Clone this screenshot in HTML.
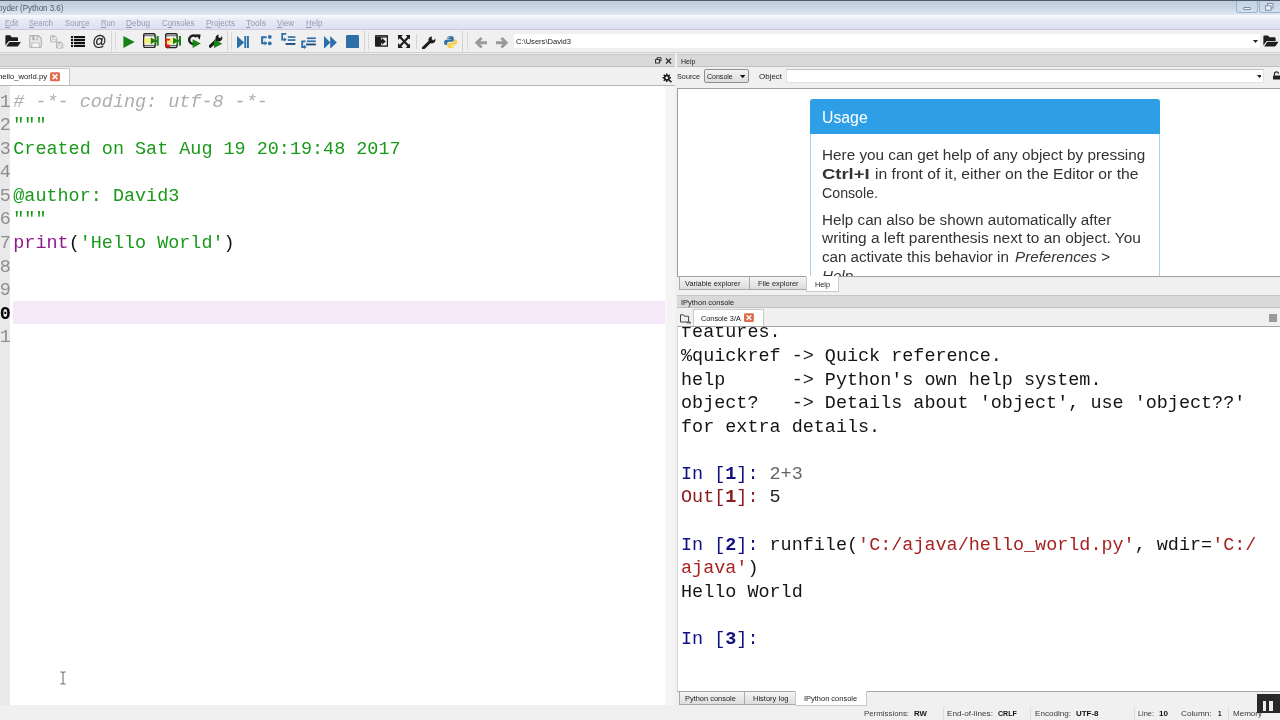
<!DOCTYPE html>
<html>
<head>
<meta charset="utf-8">
<title>Spyder (Python 3.6)</title>
<style>
html,body{margin:0;padding:0;}
body{will-change:transform;width:1280px;height:720px;overflow:hidden;background:#f0f0f0;position:relative;font-family:"Liberation Sans",sans-serif;font-size:8px;color:#222;}
.abs{position:absolute;}
.lb{position:absolute;white-space:nowrap;line-height:12px;height:12px;transform-origin:0 50%;}
.lb u{text-decoration-thickness:0.5px;text-underline-offset:1px;}
#titlebar{left:0;top:0;width:1280px;height:15px;background:linear-gradient(#c0ccdc 0,#ccd8e6 55%,#e0e8f2 100%);border-top:1px solid #505a64;box-sizing:border-box;}
#menubar{left:0;top:15px;width:1280px;height:15px;box-sizing:border-box;border-bottom:1px solid #c9cbd8;background:linear-gradient(#fbfcfe 0,#e8ebf6 35%,#dcdff0 100%);}
.sep{position:absolute;top:31px;width:1px;height:21px;background:#d4d4d4;}
.grip{position:absolute;top:33px;width:1px;height:18px;background-image:linear-gradient(#c2c2c2 50%,transparent 50%);background-size:1px 2px;}
.band{position:absolute;height:13px;background:#d9d9d9;border-top:1px solid #c6c6c6;border-bottom:1px solid #c2c2c2;box-sizing:border-box;}
.mono{font-family:"Liberation Mono",monospace;font-size:18.45px;white-space:pre;line-height:23.5px;}
.ln{position:absolute;left:0;height:23.5px;}
.tab{position:absolute;box-sizing:border-box;border:1px solid #a9a9a9;background:linear-gradient(#f4f4f4,#dddddd);}
.tab.sel{background:#fff;border-color:#c9c9c9;}
.hp{font-size:15.4px;line-height:18.75px;color:#333;white-space:nowrap;}
</style>
</head>
<body>
<div id="titlebar" class="abs"></div>
<div id="title" class="lb" style="left:-1.6px;top:1.5px;font-size:9px;color:#505a66;transform:scaleX(0.8832);">pyder (Python 3.6)</div>
<div id="menubar" class="abs"></div>
<div id="m1" class="lb" style="left:4.5px;top:16.5px;font-size:8.5px;color:#959bad;transform:scaleX(0.8870);"><u>E</u>dit</div>
<div id="m2" class="lb" style="left:29px;top:16.5px;font-size:8.5px;color:#959bad;transform:scaleX(0.8910);"><u>S</u>earch</div>
<div id="m3" class="lb" style="left:64.5px;top:16.5px;font-size:8.5px;color:#959bad;transform:scaleX(0.9090);">Sour<u>c</u>e</div>
<div id="m4" class="lb" style="left:100.5px;top:16.5px;font-size:8.5px;color:#959bad;transform:scaleX(0.8969);"><u>R</u>un</div>
<div id="m5" class="lb" style="left:126px;top:16.5px;font-size:8.5px;color:#959bad;transform:scaleX(0.9576);"><u>D</u>ebug</div>
<div id="m6" class="lb" style="left:162px;top:16.5px;font-size:8.5px;color:#959bad;transform:scaleX(0.9167);">C<u>o</u>nsoles</div>
<div id="m7" class="lb" style="left:205.5px;top:16.5px;font-size:8.5px;color:#959bad;transform:scaleX(0.9440);"><u>P</u>rojects</div>
<div id="m8" class="lb" style="left:246px;top:16.5px;font-size:8.5px;color:#959bad;transform:scaleX(1.0079);"><u>T</u>ools</div>
<div id="m9" class="lb" style="left:277px;top:16.5px;font-size:8.5px;color:#959bad;transform:scaleX(0.9291);"><u>V</u>iew</div>
<div id="m10" class="lb" style="left:305.7px;top:16.5px;font-size:8.5px;color:#959bad;transform:scaleX(0.9323);"><u>H</u>elp</div>
<div class="abs" style="left:1236px;top:1px;width:22px;height:12px;box-sizing:border-box;border:1px solid #9fb2c8;border-top:none;border-radius:0 0 3px 3px;background:linear-gradient(#c3d3e6,#d2deed);"></div>
<div class="abs" style="left:1259px;top:1px;width:24px;height:12px;box-sizing:border-box;border:1px solid #9fb2c8;border-top:none;border-radius:0 0 3px 3px;background:linear-gradient(#c3d3e6,#d2deed);"></div>
<div class="abs" style="left:1243px;top:7px;width:8px;height:3px;box-sizing:border-box;border:1px solid #7f8b9c;background:#eef3f9;border-radius:1px;"></div>
<svg class="abs" style="left:1265px;top:3px" width="9" height="8" viewBox="0 0 9 8"><rect x="2.5" y="0.5" width="5.5" height="4.5" fill="#e4ebf4" stroke="#7f8b9c" stroke-width="0.9"/><rect x="0.5" y="2.8" width="5.5" height="4.5" fill="#e4ebf4" stroke="#7f8b9c" stroke-width="0.9"/></svg>
<div class="sep" style="left:111px"></div>
<div class="sep" style="left:227px"></div>
<div class="sep" style="left:364px"></div>
<div class="sep" style="left:462px"></div>
<div class="grip" style="left:115px"></div>
<div class="grip" style="left:231px"></div>
<div class="grip" style="left:368px"></div>
<div class="grip" style="left:467px"></div>
<div class="abs" style="left:416px;top:34px;width:1px;height:15px;background:#d4d4d4;"></div>
<svg class="abs" style="left:5px;top:35px" width="16" height="12" viewBox="0 0 16 12"><path d="M0.4 1.1 Q0.4 0.2 1.3 0.2 H4.8 Q5.4 0.2 5.8 0.8 L6.6 2.2 H12 Q13 2.2 13 3.2 V6 H4.4 Q3.6 6 3.2 6.8 L0.4 10.6 Z" fill="#1e1e1e"/><path d="M4.5 6.9 H15.2 Q15.9 6.9 15.5 7.6 L13 11.2 Q12.7 11.6 12 11.6 H1.2 Z" fill="#1e1e1e"/></svg>
<svg class="abs" style="left:29px;top:35px" width="13" height="13" viewBox="0 0 13 13"><path d="M0.8 1.5 Q0.8 0.6 1.7 0.6 H9.3 L12.3 3.6 V11.5 Q12.3 12.4 11.4 12.4 H1.7 Q0.8 12.4 0.8 11.5 Z" fill="#e9e9e9" stroke="#aeaeae" stroke-width="1.1"/><rect x="3.2" y="0.8" width="5.6" height="4.4" fill="#b4b4b4"/><rect x="5.6" y="1.2" width="2" height="3.4" fill="#f0f0f0"/><rect x="2.9" y="7.9" width="7.4" height="4.4" fill="#f6f6f6" stroke="#b4b4b4" stroke-width="0.8"/></svg>
<svg class="abs" style="left:50.4px;top:35px" width="14" height="14" viewBox="0 0 14 14"><path d="M0.5 0.9 H5.2 L6.8 2.5 V6.8 H0.5 Z" fill="#e9e9e9" stroke="#b2b2b2" stroke-width="0.9"/><rect x="1.8" y="0.9" width="2.8" height="1.9" fill="#bdbdbd"/><rect x="1.7" y="4.3" width="3.8" height="2.4" fill="#f3f3f3" stroke="#bbb" stroke-width="0.6"/><g transform="translate(6,6.2)"><path d="M0.5 0.9 H5.2 L6.8 2.5 V6.8 H0.5 Z" fill="#e9e9e9" stroke="#b2b2b2" stroke-width="0.9"/><rect x="1.8" y="0.9" width="2.8" height="1.9" fill="#bdbdbd"/><rect x="1.7" y="4.3" width="3.8" height="2.4" fill="#f3f3f3" stroke="#bbb" stroke-width="0.6"/></g></svg>
<svg class="abs" style="left:71px;top:35.5px" width="14" height="11.6" viewBox="0 0 14 11.6"><rect x="0" y="0" width="2" height="2.2" fill="#111"/><rect x="2.9" y="0" width="11.1" height="2.2" fill="#111"/><rect x="0" y="3" width="2" height="2.2" fill="#111"/><rect x="2.9" y="3" width="11.1" height="2.2" fill="#111"/><rect x="0" y="6" width="2" height="2.2" fill="#111"/><rect x="2.9" y="6" width="11.1" height="2.2" fill="#111"/><rect x="0" y="9" width="2" height="2.2" fill="#111"/><rect x="2.9" y="9" width="11.1" height="2.2" fill="#111"/></svg>
<svg class="abs" style="left:92px;top:33px" width="16" height="17" viewBox="0 0 16 17"><g transform="translate(-1.0,0.22) scale(1.08,1.04)"><text x="1.5" y="12.4" font-family="Liberation Sans" font-size="14.4" fill="#1c1c1c" stroke="#1c1c1c" stroke-width="0.25" textLength="12.9" lengthAdjust="spacingAndGlyphs">@</text></g></svg>
<svg class="abs" style="left:123px;top:36px" width="12" height="12" viewBox="0 0 12 12"><path d="M0.4 0 L11.6 6 L0.4 12 Z" fill="#158215"/></svg>
<svg class="abs" style="left:143.4px;top:33px" width="16" height="15.4" viewBox="0 0 16 15.4"><rect x="0.7" y="0.7" width="11.4" height="13.8" rx="1.4" fill="#fff" stroke="#262626" stroke-width="1.4"/><rect x="1.4" y="5" width="10" height="5.6" fill="#f4ef7c"/><path d="M0.6 2.8 H12.2 M0.6 12.4 H12.2" stroke="#444" stroke-width="0.9"/><path d="M7.8 4.2 L12.8 7.8 L7.8 11.4 Z" fill="#158215"/><rect x="8.6" y="6.8" width="5.4" height="2" fill="#158215"/><rect x="13.6" y="3" width="2.1" height="9.6" fill="#158215"/></svg>
<svg class="abs" style="left:165px;top:33px" width="17" height="16" viewBox="0 0 17 16"><rect x="0.7" y="0.7" width="11.4" height="13.8" rx="1.4" fill="#fff" stroke="#262626" stroke-width="1.4"/><rect x="1.4" y="5" width="10" height="5.6" fill="#f4ef7c"/><path d="M0.6 2.8 H12.2 M0.6 12.4 H12.2" stroke="#444" stroke-width="0.9"/><g transform="translate(0.3,0)"><path d="M7.8 4.2 L12.8 7.8 L7.8 11.4 Z" fill="#158215"/><rect x="8.6" y="6.8" width="5.4" height="2" fill="#158215"/><rect x="13.6" y="3" width="2.1" height="9.6" fill="#158215"/></g><path d="M4.8 6.6 H1 V13 H3.2" fill="none" stroke="#e01818" stroke-width="1.8"/><path d="M2.4 10.4 L5.4 13.2 L2.6 15.8 Z" fill="#e01818"/></svg>
<svg class="abs" style="left:187.5px;top:34px" width="13" height="14.2" viewBox="0 0 13 14.2"><path d="M8.5 3.0 A4.2 4.2 0 1 0 8.7 8.3" fill="none" stroke="#1c1c1c" stroke-width="2.4"/><path d="M7.2 0.2 L12.6 0.6 L11.8 5.8 Z" fill="#1c1c1c"/><path d="M4.6 5.2 L12.8 9.6 L4.6 14 Z" fill="#158215"/></svg>
<svg class="abs" style="left:208.5px;top:34px" width="14" height="14.5" viewBox="0 0 14 14.5"><path d="M1.4 12.2 L8.4 5.6" stroke="#1c1c1c" stroke-width="3.2" stroke-linecap="round"/><path d="M12.9 2.3 A3.4 3.4 0 1 1 9.6 0.6 L9.4 3 L11.3 4.2 Z" fill="#1c1c1c"/><path d="M5 5.6 L13.4 9.8 L5 14 Z" fill="#158215"/></svg>
<svg class="abs" style="left:237.2px;top:35.6px" width="12" height="12.8" viewBox="0 0 12 12.8"><path d="M0 0 L7.2 6.4 L0 12.8 Z" fill="#2f6fa8"/><rect x="7.3" y="0" width="1.9" height="12.8" fill="#2f6fa8"/><rect x="10" y="0" width="1.9" height="12.8" fill="#2f6fa8"/></svg>
<svg class="abs" style="left:260.8px;top:35px" width="11" height="11" viewBox="0 0 11 11"><circle cx="8.8" cy="1.9" r="1.9" fill="#2f6fa8"/><circle cx="8.8" cy="8.4" r="1.9" fill="#2f6fa8"/><path d="M5.6 2.2 H1.1 V8.2 H4" fill="none" stroke="#2f6fa8" stroke-width="2"/><path d="M3.6 5.8 L6.4 8.2 L3.6 10.6 Z" fill="#2f6fa8"/></svg>
<svg class="abs" style="left:280.5px;top:33px" width="15" height="12.5" viewBox="0 0 15 12.5"><path d="M5.2 0.9 H1.2 V6.6 H3.6" fill="none" stroke="#2f6fa8" stroke-width="1.8"/><path d="M3.2 4.4 L5.8 6.6 L3.2 8.8 Z" fill="#2f6fa8"/><rect x="6.8" y="3.2" width="7.6" height="1.7" fill="#2f6fa8"/><rect x="6.8" y="6.2" width="7.6" height="1.7" fill="#2f6fa8"/><rect x="4.6" y="10" width="9.8" height="1.9" fill="#1f4e80"/></svg>
<svg class="abs" style="left:301.4px;top:36.5px" width="15.5" height="12" viewBox="0 0 15.5 12"><rect x="6" y="0.4" width="8.8" height="1.7" fill="#2f6fa8"/><rect x="6" y="3.4" width="8.8" height="1.7" fill="#2f6fa8"/><rect x="5" y="6.5" width="9.8" height="1.9" fill="#1f4e80"/><path d="M4.6 4.4 H1.2 V10 H3.4" fill="none" stroke="#2f6fa8" stroke-width="1.9"/><path d="M3 7.8 L5.6 10 L3 12 Z" fill="#2f6fa8"/></svg>
<svg class="abs" style="left:324px;top:35.6px" width="13" height="12.8" viewBox="0 0 13 12.8"><path d="M0 0 L6.4 6.4 L0 12.8 Z M6.2 0 L12.8 6.4 L6.2 12.8 Z" fill="#2f6fa8"/></svg>
<svg class="abs" style="left:346.3px;top:35px" width="13" height="13.2" viewBox="0 0 13 13.2"><rect x="0" y="0" width="13" height="13.2" rx="1.2" fill="#2f6fa8"/></svg>
<svg class="abs" style="left:375px;top:35px" width="13.2" height="11.8" viewBox="0 0 13.2 11.8"><rect x="0" y="0" width="13.2" height="11.8" rx="1" fill="#1e1e1e"/><rect x="0.8" y="0.6" width="11.6" height="1.2" fill="#555"/><rect x="6.2" y="2.6" width="5.6" height="7.8" fill="#f0f0f0"/><path d="M1.6 4.8 H7 V3 L10.8 6.4 L7 9.8 V8 H1.6 Z" fill="#1e1e1e"/></svg>
<svg class="abs" style="left:397.5px;top:35px" width="12.6" height="13" viewBox="0 0 12.6 13"><path d="M2 2 L10.6 11 M10.6 2 L2 11" stroke="#1e1e1e" stroke-width="2.2"/><path d="M0 0 H5 L0 5 Z M12.6 0 V5 L7.6 0 Z M0 13 V8 L5 13 Z M12.6 13 H7.6 L12.6 8 Z" fill="#1e1e1e"/></svg>
<svg class="abs" style="left:422.3px;top:35.5px" width="14" height="13.4" viewBox="0 0 14 13.4"><path d="M1.4 12 L8.6 5" stroke="#1e1e1e" stroke-width="3.1" stroke-linecap="round"/><path d="M13.2 2.6 A3.5 3.5 0 1 1 10 0.4 L9.6 3 L11.6 4.4 Z" fill="#1e1e1e"/></svg>
<svg class="abs" style="left:444px;top:35.6px" width="13.2" height="12.6" viewBox="0 0 13.2 12.6"><path d="M6.4 0 Q3.4 0 3.4 1.8 V3.2 H6.8 V3.8 H2 Q0 3.8 0 6.4 Q0 9 2 9 H3.2 V7.4 Q3.2 5.8 5 5.8 H8.2 Q9.8 5.8 9.8 4.2 V1.8 Q9.8 0 6.4 0 Z" fill="#3572a5"/><circle cx="4.9" cy="1.6" r="0.6" fill="#fff"/><path d="M6.8 12.6 Q9.8 12.6 9.8 10.8 V9.4 H6.4 V8.8 H11.2 Q13.2 8.8 13.2 6.2 Q13.2 3.6 11.2 3.6 H10 V5.2 Q10 6.8 8.2 6.8 H5 Q3.4 6.8 3.4 8.4 V10.8 Q3.4 12.6 6.8 12.6 Z" fill="#f6cf4c"/><circle cx="8.3" cy="11" r="0.6" fill="#fff"/></svg>
<svg class="abs" style="left:475px;top:36.5px" width="12" height="11.5" viewBox="0 0 12 11.5"><path d="M6.6 1 L1.8 5.75 L6.6 10.5 M2.4 5.75 H12" fill="none" stroke="#9a9a9a" stroke-width="2.8"/></svg>
<svg class="abs" style="left:496px;top:36.5px" width="12" height="11.5" viewBox="0 0 12 11.5"><path d="M5.4 1 L10.2 5.75 L5.4 10.5 M9.6 5.75 H0" fill="none" stroke="#9a9a9a" stroke-width="2.8"/></svg>
<div class="abs" style="left:514px;top:34px;width:746px;height:14px;background:#fff;"></div>
<div id="path" class="lb" style="left:516px;top:35.5px;font-size:8px;color:#222;transform:scaleX(0.9442);">C:\Users\David3</div>
<svg class="abs" style="left:1252.5px;top:39.5px" width="5" height="3" viewBox="0 0 5 3"><path d="M0 0 H5 L2.5 3 Z" fill="#222"/></svg>
<svg class="abs" style="left:1262.5px;top:35px" width="15.5" height="12" viewBox="0 0 16 12"><path d="M0.4 1.1 Q0.4 0.2 1.3 0.2 H4.8 Q5.4 0.2 5.8 0.8 L6.6 2.2 H12 Q13 2.2 13 3.2 V6 H4.4 Q3.6 6 3.2 6.8 L0.4 10.6 Z" fill="#1e1e1e"/><path d="M4.5 6.9 H15.2 Q15.9 6.9 15.5 7.6 L13 11.2 Q12.7 11.6 12 11.6 H1.2 Z" fill="#1e1e1e"/></svg>
<div class="abs" style="left:0;top:52px;width:1280px;height:1px;background:#cdcdcd;"></div>
<div class="band" style="left:0;top:54px;width:675px;"></div>
<div class="abs" style="left:-2px;top:68px;width:72px;height:18px;background:#fff;border:1px solid #c6c6c6;border-bottom:none;box-sizing:border-box;"></div>
<div class="abs" style="left:0;top:85px;width:675px;height:1px;background:#b6b6b6;"></div>
<div id="edtab" class="lb" style="left:-2px;top:71.2px;font-size:8px;color:#222;transform:scaleX(0.9581);">hello_world.py</div>
<svg class="abs" style="left:50.4px;top:72.2px" width="10" height="9.5" viewBox="0 0 10 9"><rect x="0" y="0" width="10" height="9" rx="1.5" fill="#e06a4c"/><path d="M3.1 2.6 L6.9 6.4 M6.9 2.6 L3.1 6.4" stroke="#fff" stroke-width="1.5" stroke-linecap="round"/></svg>
<svg class="abs" style="left:653px;top:56px" width="22" height="10" viewBox="0 0 22 10"><rect x="2.5" y="3.5" width="4" height="3.5" fill="none" stroke="#333" stroke-width="1"/><path d="M4 3 V1.7 H8 V5 H7" fill="none" stroke="#333" stroke-width="1"/><path d="M13 2.5 L18 7.5 M18 2.5 L13 7.5" stroke="#222" stroke-width="1.1"/></svg>
<svg class="abs" style="left:662px;top:73.2px" width="10.4" height="10.4" viewBox="0 0 12 12"><g fill="#1a1a1a"><circle cx="5.5" cy="5.5" r="3.4"/><g stroke="#1a1a1a" stroke-width="1.7"><path d="M5.5 0.6 V10.4 M0.6 5.5 H10.4 M2 2 L9 9 M9 2 L2 9"/></g></g><circle cx="5.5" cy="5.5" r="1.6" fill="#f0f0f0"/><path d="M8.5 8.5 L11 10.5" stroke="#1a1a1a" stroke-width="1.6"/></svg>
<div class="abs" style="left:0;top:86px;width:665px;height:619px;background:#fff;overflow:hidden;">
<div class="abs" style="left:0;top:0;width:10px;height:619px;background:#e9e9e9;"></div>
<div class="abs" style="left:13px;top:214.5px;width:652px;height:23.5px;background:#f5e9f9;"></div>
<div class="ln mono" style="top:4.6px;"><span style="display:inline-block;width:13.6px;margin-left:-0.3px;color:#8e8e8e;">1</span><span style="color:#adadad;font-style:italic"># -*- coding: utf-8 -*-</span></div>
<div class="ln mono" style="top:28.159999999999997px;"><span style="display:inline-block;width:13.6px;margin-left:-0.3px;color:#8e8e8e;">2</span><span style="color:#1a9a1a">"""</span></div>
<div class="ln mono" style="top:51.72px;"><span style="display:inline-block;width:13.6px;margin-left:-0.3px;color:#8e8e8e;">3</span><span style="color:#1a9a1a">Created on Sat Aug 19 20:19:48 2017</span></div>
<div class="ln mono" style="top:75.27999999999999px;"><span style="display:inline-block;width:13.6px;margin-left:-0.3px;color:#8e8e8e;">4</span></div>
<div class="ln mono" style="top:98.83999999999999px;"><span style="display:inline-block;width:13.6px;margin-left:-0.3px;color:#8e8e8e;">5</span><span style="color:#1a9a1a">@author: David3</span></div>
<div class="ln mono" style="top:122.39999999999999px;"><span style="display:inline-block;width:13.6px;margin-left:-0.3px;color:#8e8e8e;">6</span><span style="color:#1a9a1a">"""</span></div>
<div class="ln mono" style="top:145.95999999999998px;"><span style="display:inline-block;width:13.6px;margin-left:-0.3px;color:#8e8e8e;">7</span><span style="color:#8c1a8c">print</span><span style="color:#111">(</span><span style="color:#1a9a1a">'Hello World'</span><span style="color:#111">)</span></div>
<div class="ln mono" style="top:169.51999999999998px;"><span style="display:inline-block;width:13.6px;margin-left:-0.3px;color:#8e8e8e;">8</span></div>
<div class="ln mono" style="top:193.07999999999998px;"><span style="display:inline-block;width:13.6px;margin-left:-0.3px;color:#8e8e8e;">9</span></div>
<div class="ln mono" style="top:216.64px;"><span style="display:inline-block;width:13.6px;margin-left:-0.3px;color:#000;font-weight:bold;">0</span></div>
<div class="ln mono" style="top:240.2px;"><span style="display:inline-block;width:13.6px;margin-left:-0.3px;color:#8e8e8e;">1</span></div>
</div>
<div class="abs" style="left:665px;top:86px;width:10px;height:619px;background:#f4f4f4;border-left:1px solid #fafafa;box-sizing:border-box;"></div>
<svg class="abs" style="left:59px;top:671px" width="8" height="14" viewBox="0 0 8 14"><path d="M1.5 1 H3.2 Q4 1 4 2 Q4 1 4.8 1 H6.5 M4 2 V12 M1.5 13 H3.2 Q4 13 4 12 Q4 13 4.8 13 H6.5" stroke="#555" stroke-width="0.9" fill="none"/></svg>
<div class="band" style="left:677px;top:54px;width:603px;"></div>
<div id="helpt" class="lb" style="left:680.6px;top:55.8px;font-size:8px;color:#222;transform:scaleX(0.8752);">Help</div>
<div id="source" class="lb" style="left:677px;top:71.0px;font-size:8px;color:#222;transform:scaleX(0.9070);">Source</div>
<div class="abs" style="left:704px;top:69px;width:45px;height:14px;box-sizing:border-box;border:1px solid #8f8f8f;border-radius:2px;background:linear-gradient(#f3f3f3,#dcdcdc);"></div>
<div id="consolecb" class="lb" style="left:707px;top:71.0px;font-size:8px;color:#222;transform:scaleX(0.8771);">Console</div>
<svg class="abs" style="left:739.5px;top:74.7px" width="5.4" height="3.2" viewBox="0 0 5.4 3.2"><path d="M0 0 H5.4 L2.7 3.2 Z" fill="#111"/></svg>
<div id="object" class="lb" style="left:759px;top:71.0px;font-size:8px;color:#222;transform:scaleX(0.9946);">Object</div>
<div class="abs" style="left:786px;top:69px;width:478px;height:14px;box-sizing:border-box;background:#fff;border:1px solid #e2e2e2;border-top-color:#bdbdbd;"></div>
<svg class="abs" style="left:1256.5px;top:75px" width="4.6" height="2.8" viewBox="0 0 4.6 2.8"><path d="M0 0 H5 L2.5 3 Z" fill="#222"/></svg>
<svg class="abs" style="left:1273px;top:71px" width="7" height="9" viewBox="0 0 7 9"><path d="M1.5 4.5 V2.8 A2 2 0 0 1 5.5 2.8" fill="none" stroke="#222" stroke-width="1.2"/><rect x="0" y="4.5" width="7" height="4" fill="#222"/></svg>
<div class="abs" style="left:677px;top:88px;width:603px;height:189px;box-sizing:border-box;background:#fff;border:1px solid #9f9f9f;border-right:none;overflow:hidden;">
 <div class="abs" style="left:132px;top:10px;width:350px;height:200px;box-sizing:border-box;border:1px solid #a6d1f0;border-radius:3px 3px 0 0;background:#fff;">
  <div class="abs" style="left:-1px;top:-1px;width:350px;height:35px;background:#2e9fe6;border-radius:3px 3px 0 0;"></div>
 </div>
</div>
<div class="abs" style="left:678px;top:89px;width:602px;height:187px;overflow:hidden;"><div class="abs" style="left:-678px;top:-89px;">
<div id="h_usage" class="lb" style="left:821.7px;top:107.6px;line-height:20px;height:20px;font-size:16px;color:#fff;transform:scaleX(0.9881);">Usage</div>
<div id="h1" class="lb" style="left:821.7px;top:145.0px;line-height:20px;height:20px;font-size:15.4px;color:#333;transform:scaleX(0.9944);">Here you can get help of any object by pressing</div>
<div id="h2a" class="lb" style="left:821.7px;top:163.75px;line-height:20px;height:20px;font-size:15.4px;color:#333;transform:scaleX(1.1965);"><b>Ctrl+I</b></div>
<div id="h2b" class="lb" style="left:874.8px;top:163.75px;line-height:20px;height:20px;font-size:15.4px;color:#333;transform:scaleX(1.0198);">in front of it, either on the Editor or the</div>
<div id="h3" class="lb" style="left:821.7px;top:182.5px;line-height:20px;height:20px;font-size:15.4px;color:#333;transform:scaleX(0.9218);">Console.</div>
<div id="h4" class="lb" style="left:821.7px;top:209.5px;line-height:20px;height:20px;font-size:15.4px;color:#333;transform:scaleX(0.9887);">Help can also be shown automatically after</div>
<div id="h5" class="lb" style="left:821.7px;top:228.25px;line-height:20px;height:20px;font-size:15.4px;color:#333;transform:scaleX(1.0046);">writing a left parenthesis next to an object. You</div>
<div id="h6a" class="lb" style="left:821.7px;top:247.0px;line-height:20px;height:20px;font-size:15.4px;color:#333;transform:scaleX(0.9840);">can activate this behavior in</div>
<div id="h6b" class="lb" style="left:1015px;top:247.0px;line-height:20px;height:20px;font-size:15.4px;color:#333;transform:scaleX(0.9870);"><i>Preferences &gt;</i></div>
<div id="h7" class="lb" style="left:821.7px;top:265.75px;line-height:20px;height:20px;font-size:15.4px;color:#333;transform:scaleX(0.9823);"><i>Help</i>.</div>
</div></div>
<div class="tab" style="left:679px;top:276px;width:71px;height:14px;border-top-color:#9f9f9f;"></div>
<div class="tab" style="left:749px;top:276px;width:58px;height:14px;border-top-color:#9f9f9f;"></div>
<div class="tab sel" style="left:806px;top:276px;width:33px;height:16px;border-top-color:#fff;"></div>
<div id="t_var" class="lb" style="left:685.4px;top:278.0px;font-size:8px;color:#222;transform:scaleX(0.9250);">Variable explorer</div>
<div id="t_file" class="lb" style="left:757.5px;top:278.0px;font-size:8px;color:#222;transform:scaleX(0.9201);">File explorer</div>
<div id="t_help" class="lb" style="left:815.4px;top:278.5px;font-size:8px;color:#222;transform:scaleX(0.9117);">Help</div>
<div class="band" style="left:677px;top:295px;width:603px;"></div>
<div id="ipyt" class="lb" style="left:680.7px;top:296.5px;font-size:8px;color:#222;transform:scaleX(0.9326);">IPython console</div>
<svg class="abs" style="left:680px;top:313.5px" width="12" height="10" viewBox="0 0 12 10"><path d="M0.5 8 V0.8 H3.4 L4.4 2.2 H8.6 V8 Z" fill="none" stroke="#333" stroke-width="0.9"/><path d="M6.5 8.8 H10.6 M9.2 7.4 L10.6 8.8 L9.2 10" fill="none" stroke="#333" stroke-width="0.8"/></svg>
<div class="tab sel" style="left:693px;top:309px;width:71px;height:18px;border-bottom-color:#fff;"></div>
<div id="contab" class="lb" style="left:701px;top:313.0px;font-size:8px;color:#111;transform:scaleX(0.9130);">Console 3/A</div>
<svg class="abs" style="left:744.3px;top:313.1px" width="9.9" height="9.3" viewBox="0 0 10 9"><rect x="0" y="0" width="10" height="9" rx="1.5" fill="#e06a4c"/><path d="M3.1 2.6 L6.9 6.4 M6.9 2.6 L3.1 6.4" stroke="#fff" stroke-width="1.5" stroke-linecap="round"/></svg>
<div class="abs" style="left:1269px;top:314px;width:8px;height:8px;background:#9a9a9a;"></div>
<div class="abs" style="left:677px;top:326px;width:603px;height:366px;box-sizing:border-box;background:#fff;border:1px solid #a6a6a6;border-left-color:#d9d9d9;border-right:none;overflow:hidden;">
<div class="ln mono" style="left:3px;top:-5.66px;"><span style="color:#141414;">features.</span></div>
<div class="ln mono" style="left:3px;top:17.919999999999998px;"><span style="color:#141414;">%quickref -&gt; Quick reference.</span></div>
<div class="ln mono" style="left:3px;top:41.5px;"><span style="color:#141414;">help      -&gt; Python's own help system.</span></div>
<div class="ln mono" style="left:3px;top:65.08px;"><span style="color:#141414;">object?   -&gt; Details about 'object', use 'object??'</span></div>
<div class="ln mono" style="left:3px;top:88.66px;"><span style="color:#141414;">for extra details.</span></div>
<div class="ln mono" style="left:3px;top:112.24px;"></div>
<div class="ln mono" style="left:3px;top:135.82px;"><span style="color:#101080;">In [</span><span style="color:#101080;font-weight:bold;">1</span><span style="color:#101080;">]: </span><span style="color:#666;">2+3</span></div>
<div class="ln mono" style="left:3px;top:159.4px;"><span style="color:#8b1a1a;">Out[</span><span style="color:#8b1a1a;font-weight:bold;">1</span><span style="color:#8b1a1a;">]: </span><span style="color:#222;">5</span></div>
<div class="ln mono" style="left:3px;top:182.98px;"></div>
<div class="ln mono" style="left:3px;top:206.55999999999997px;"><span style="color:#101080;">In [</span><span style="color:#101080;font-weight:bold;">2</span><span style="color:#101080;">]: </span><span style="color:#141414;">runfile(</span><span style="color:#a82222;">'C:/ajava/hello_world.py'</span><span style="color:#141414;">, wdir=</span><span style="color:#a82222;">'C:/</span></div>
<div class="ln mono" style="left:3px;top:230.14px;"><span style="color:#a82222;">ajava'</span><span style="color:#141414;">)</span></div>
<div class="ln mono" style="left:3px;top:253.72px;"><span style="color:#141414;">Hello World</span></div>
<div class="ln mono" style="left:3px;top:277.29999999999995px;"></div>
<div class="ln mono" style="left:3px;top:300.87999999999994px;"><span style="color:#101080;">In [</span><span style="color:#101080;font-weight:bold;">3</span><span style="color:#101080;">]: </span></div>
</div>
<div class="tab" style="left:679px;top:691px;width:66px;height:13.5px;border-top-color:#a6a6a6;"></div>
<div class="tab" style="left:744px;top:691px;width:52px;height:13.5px;border-top-color:#a6a6a6;"></div>
<div class="tab sel" style="left:795px;top:691px;width:72px;height:14.5px;border-top-color:#fff;"></div>
<div id="b_py" class="lb" style="left:685px;top:692.75px;font-size:8px;color:#222;transform:scaleX(0.9286);">Python console</div>
<div id="b_hist" class="lb" style="left:752.5px;top:692.75px;font-size:8px;color:#222;transform:scaleX(0.9392);">History log</div>
<div id="b_ipy" class="lb" style="left:804.4px;top:693.4px;font-size:8px;color:#222;transform:scaleX(0.9326);">IPython console</div>
<div id="s_perm" class="lb" style="left:864px;top:708.0px;font-size:8px;color:#3a3a3a;transform:scaleX(0.9826);">Permissions:</div>
<div id="s_rw" class="lb" style="left:914px;top:708.0px;font-size:8px;color:#111;transform:scaleX(0.9706);"><b>RW</b></div>
<div id="s_eol" class="lb" style="left:947px;top:708.0px;font-size:8px;color:#3a3a3a;transform:scaleX(1.0240);">End-of-lines:</div>
<div id="s_crlf" class="lb" style="left:998px;top:708.0px;font-size:8px;color:#111;transform:scaleX(0.8768);"><b>CRLF</b></div>
<div id="s_enc" class="lb" style="left:1034.9px;top:708.0px;font-size:8px;color:#3a3a3a;transform:scaleX(1.0142);">Encoding:</div>
<div id="s_utf" class="lb" style="left:1075.9px;top:708.0px;font-size:8px;color:#111;transform:scaleX(0.9924);"><b>UTF-8</b></div>
<div id="s_line" class="lb" style="left:1138px;top:708.0px;font-size:8px;color:#3a3a3a;transform:scaleX(0.9217);">Line:</div>
<div id="s_10" class="lb" style="left:1159.3px;top:708.0px;font-size:8px;color:#111;transform:scaleX(1.0105);"><b>10</b></div>
<div id="s_col" class="lb" style="left:1181.4px;top:708.0px;font-size:8px;color:#3a3a3a;transform:scaleX(1.0270);">Column:</div>
<div id="s_1" class="lb" style="left:1218px;top:708.0px;font-size:8px;color:#111;transform:scaleX(0.7860);"><b>1</b></div>
<div id="s_mem" class="lb" style="left:1233px;top:708.0px;font-size:8px;color:#3a3a3a;transform:scaleX(1.0038);">Memory</div>
<div class="abs" style="left:943px;top:707px;width:1px;height:13px;background:#dddddd;"></div>
<div class="abs" style="left:1030px;top:707px;width:1px;height:13px;background:#dddddd;"></div>
<div class="abs" style="left:1134px;top:707px;width:1px;height:13px;background:#dddddd;"></div>
<div class="abs" style="left:1228px;top:707px;width:1px;height:13px;background:#dddddd;"></div>
<div class="abs" style="left:1257px;top:694px;width:23px;height:19px;background:#282828;"></div>
<div class="abs" style="left:1262.5px;top:700.5px;width:3.8px;height:10px;background:#eeeeee;"></div>
<div class="abs" style="left:1268.8px;top:700.5px;width:3.8px;height:10px;background:#eeeeee;"></div>
</body>
</html>
